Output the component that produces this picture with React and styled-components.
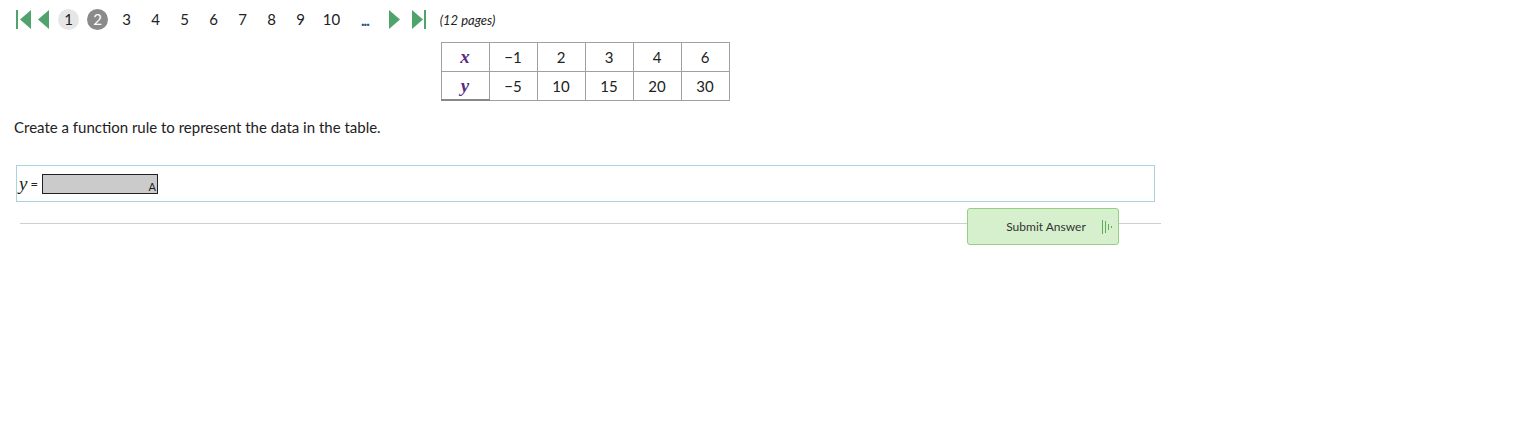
import React from "react";
import styled, { createGlobalStyle } from "styled-components";

const GlobalStyle = createGlobalStyle`
    body {
        margin: 0;
        background: #fff;
        font-family: Lato, "Open Sans", sans-serif;
        color: #222;
    }
`;

const Page = styled.div`
    width: 1141px;
    padding: 8px 0 0 14px;
`;

const Pager = styled.div`
    display: flex;
    align-items: center;
    height: 22px;
    margin-left: 1px;
`;

const NavIcon = styled.svg`
    width: 16px;
    height: 20px;
    margin-right: ${({ $gap }) => $gap || 0}px;
    fill: #4fa36b;
`;

const PageNum = styled.span`
    display: inline-flex;
    align-items: center;
    justify-content: center;
    min-width: 21px;
    height: 21px;
    padding: 0 ${({ $wide }) => ($wide ? 2 : 0)}px;
    margin-right: ${({ $gap }) => $gap ?? 8}px;
    border-radius: 11px;
    font-size: 15px;
    color: ${({ $current }) => ($current ? "#fff" : "#222")};
    background: ${({ $current, $visited }) =>
        $current ? "#8a8a8a" : $visited ? "#e6e6e6" : "transparent"};
`;

const Ellipsis = styled.span`
    font-size: 15px;
    font-weight: 900;
    color: #2a5a8a;
    letter-spacing: -1px;
    margin: 1px 19px 0 17px;
`;

const PageCount = styled.span`
    font-size: 13px;
    font-style: italic;
    color: #222;
    margin-left: 12px;
    padding-top: 2px;
`;

const TableWrap = styled.div`
    display: flex;
    justify-content: center;
    margin-top: 12px;
    padding-left: 1px;
`;

const DataTable = styled.table`
    border-collapse: collapse;
    font-size: 15px;
`;

const HeadCell = styled.th`
    width: 47px;
    height: 27.5px;
    border: 1px solid #a0a0a0;
    border-bottom: ${({ $last }) => ($last ? "2px solid #888" : "1px solid #a0a0a0")};
    font-family: "Liberation Serif", "DejaVu Serif", serif;
    font-style: italic;
    font-weight: 700;
    font-size: 19px;
    color: #5b2c83;
    padding: 0;
    line-height: 1;
`;

const Cell = styled.td`
    width: 47px;
    height: 27.5px;
    border: 1px solid #a0a0a0;
    text-align: center;
    padding: 0;
    color: #222;
`;

const Prompt = styled.p`
    margin: 17px 0 0;
    font-size: 15px;
    color: #222;
`;

const AnswerBox = styled.div`
    display: flex;
    align-items: center;
    height: 35px;
    margin: 29px 0 0 2px;
    border: 1px solid #a9d3de;
    padding-left: 2px;
`;

const VarLabel = styled.span`
    font-family: "Liberation Serif", "DejaVu Serif", serif;
    font-style: italic;
    font-size: 19px;
    color: #222;
`;

const Equals = styled.span`
    font-size: 13px;
    margin: 0 4px 0 3px;
`;

const Input = styled.div`
    position: relative;
    width: 114px;
    height: 18px;
    border: 1px solid #222;
    background: #cbcbcb;
`;

const InputTag = styled.span`
    position: absolute;
    right: 1px;
    bottom: 0;
    font-size: 11px;
    color: #222;
`;

const SubmitRow = styled.div`
    display: flex;
    align-items: center;
    margin: 6px -6px 0 6px;
    &::before,
    &::after {
        content: "";
        height: 1px;
        background: #cfcfcf;
        margin-top: -6px;
    }
    &::before {
        flex: 1;
    }
    &::after {
        width: 42px;
    }
`;

const SubmitButton = styled.button`
    display: flex;
    align-items: center;
    justify-content: center;
    width: 152px;
    height: 37px;
    padding: 0 0 0 33px;
    background: #d6f0cd;
    border: 1px solid #95cf86;
    border-radius: 3px;
    font-family: Lato, sans-serif;
    font-size: 12px;
    color: #333;
    cursor: pointer;
`;

const SpeakIcon = styled.svg`
    width: 12px;
    height: 16px;
    margin-left: 15px;
    stroke: #5fae57;
    stroke-width: 1;
    fill: none;
`;

const xs = ["\u22121", "2", "3", "4", "6"];
const ys = ["\u22125", "10", "15", "20", "30"];

const App = () => {
    return (
        <>
            <GlobalStyle />
            <Page>
                <Pager>
                    <NavIcon viewBox="0 0 16 20" $gap={6}>
                        <rect x="1" y="1" width="2" height="19" />
                        <polygon points="16,1 5,10.5 16,20" />
                    </NavIcon>
                    <NavIcon viewBox="0 0 16 20" $gap={5}>
                        <polygon points="12,1 1,10.5 12,20" />
                    </NavIcon>
                    <PageNum $visited>1</PageNum>
                    <PageNum $current>2</PageNum>
                    {["3", "4", "5", "6", "7", "8", "9"].map((n) => (
                        <PageNum key={n}>{n}</PageNum>
                    ))}
                    <PageNum $wide $gap={0}>10</PageNum>
                    <Ellipsis>...</Ellipsis>
                    <NavIcon viewBox="0 0 16 20" $gap={8}>
                        <polygon points="1,1 12,10.5 1,20" />
                    </NavIcon>
                    <NavIcon viewBox="0 0 16 20">
                        <polygon points="0,1 11,10.5 0,20" />
                        <rect x="12" y="1" width="2" height="19" />
                    </NavIcon>
                    <PageCount>(12 pages)</PageCount>
                </Pager>

                <TableWrap>
                    <DataTable>
                        <tbody>
                            <tr>
                                <HeadCell>x</HeadCell>
                                {xs.map((v, i) => (
                                    <Cell key={i}>{v}</Cell>
                                ))}
                            </tr>
                            <tr>
                                <HeadCell $last>y</HeadCell>
                                {ys.map((v, i) => (
                                    <Cell key={i}>{v}</Cell>
                                ))}
                            </tr>
                        </tbody>
                    </DataTable>
                </TableWrap>

                <Prompt>Create a function rule to represent the data in the table.</Prompt>

                <AnswerBox>
                    <VarLabel>y</VarLabel>
                    <Equals>=</Equals>
                    <Input>
                        <InputTag>A</InputTag>
                    </Input>
                </AnswerBox>

                <SubmitRow>
                    <SubmitButton>
                        Submit Answer
                        <SpeakIcon viewBox="0 0 12 16">
                            <line x1="1.5" y1="1" x2="1.5" y2="15" />
                            <line x1="4.5" y1="2" x2="4.5" y2="14" />
                            <line x1="7.5" y1="5" x2="7.5" y2="11" />
                            <line x1="10.5" y1="7" x2="10.5" y2="9" />
                        </SpeakIcon>
                    </SubmitButton>
                </SubmitRow>
            </Page>
        </>
    );
};

export default App;
